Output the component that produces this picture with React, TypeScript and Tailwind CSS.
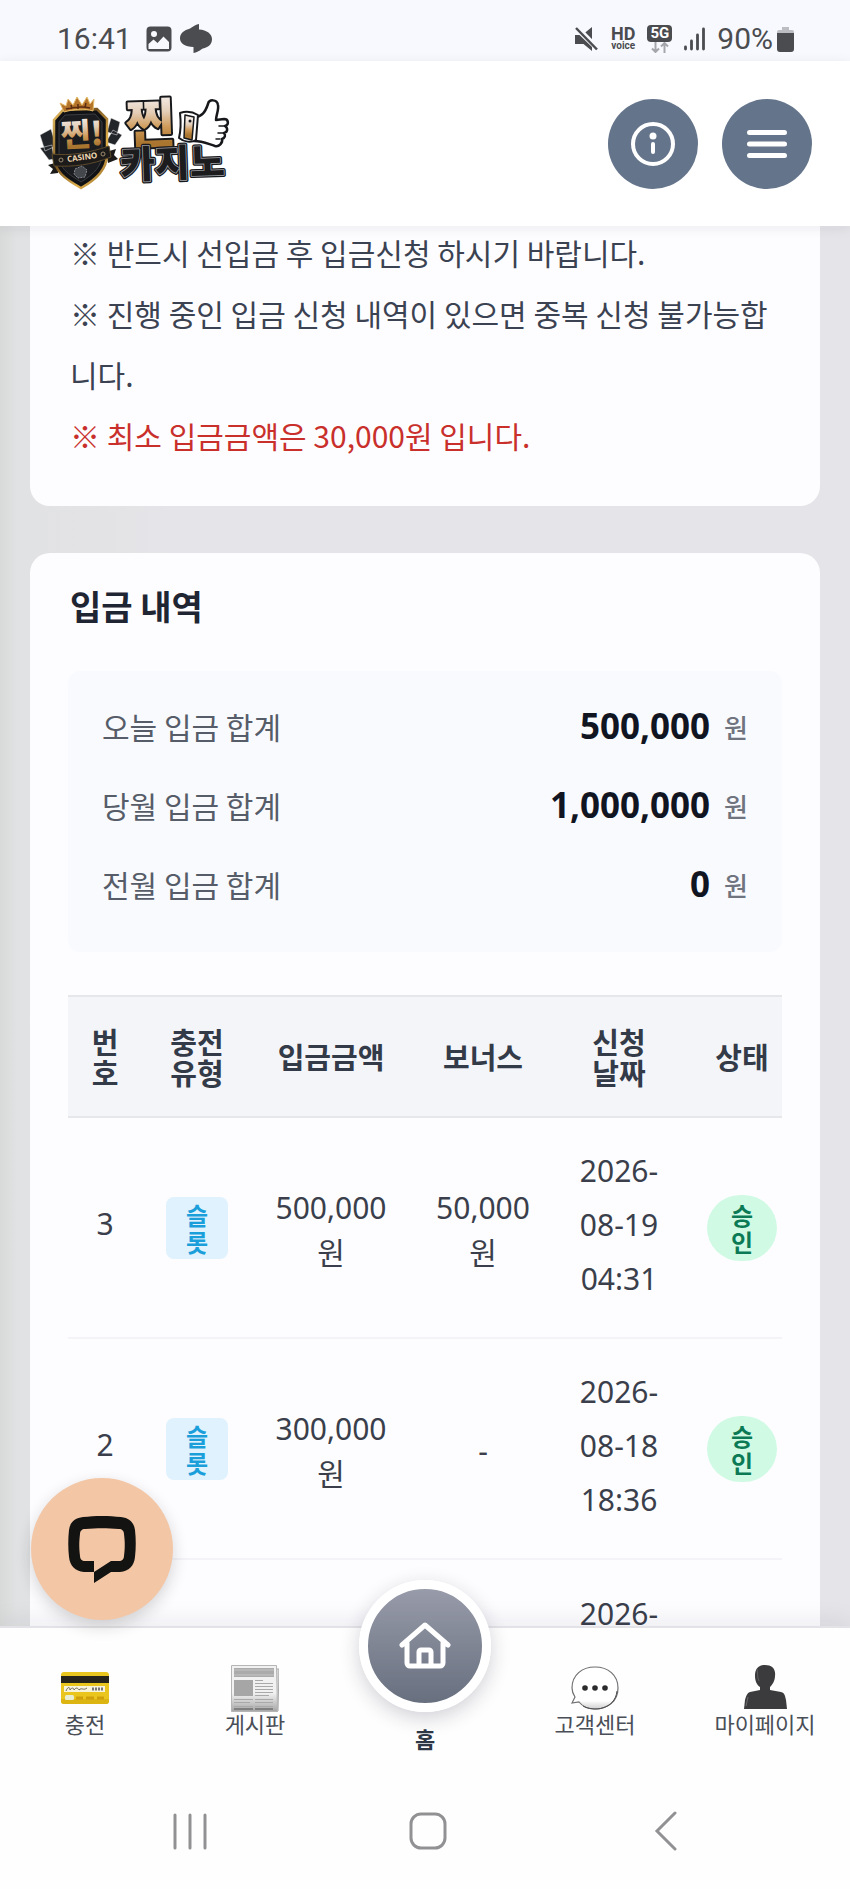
import React from 'react';

type Deposit = {
    no: number;
    type: string;
    amount: string;
    bonus?: string;
    date: [string, string, string];
    status: string;
};

const totals = [
    {label: '오늘 입금 합계', value: '500,000'},
    {label: '당월 입금 합계', value: '1,000,000'},
    {label: '전월 입금 합계', value: '0'},
];

const deposits: Deposit[] = [
    {no: 3, type: '슬롯', amount: '500,000', bonus: '50,000', date: ['2026-', '08-19', '04:31'], status: '승인'},
    {no: 2, type: '슬롯', amount: '300,000', date: ['2026-', '08-18', '18:36'], status: '승인'},
];

function StatusBar() {
    return (
        <div className="flex h-[61px] shrink-0 items-center justify-between bg-[#f8f9fe] pl-[57px] pr-14 pt-4 font-['Roboto',sans-serif] text-[30px] leading-[44px] text-[#4b4c50]">
            <div className="flex items-center gap-2">
                <span className="mr-1.5">16:41</span>
                <svg className="size-[26px]" viewBox="0 0 26 26" aria-hidden="true">
                    <rect x="1.5" y="1.5" width="23" height="23" rx="3" fill="#4b4c50" stroke="#4b4c50" strokeWidth="2"/>
                    <circle cx="8" cy="8" r="3" fill="#f8f9fe"/>
                    <path d="M2.500 18l5-4.500 4 3.500 6-6.500 5.500 5.500v7h-20.500z" fill="#f8f9fe"/>
                </svg>
                <svg className="h-[29px] w-8" viewBox="0 0 32 29" aria-hidden="true">
                    <path d="M19 0v5.500C27 6 32 10 32 15c0 6-4 8-9 9.500-2 .5-3 3-9.500 4.500v-6C5 22.500 0 19.500 0 14.500 0 9 4 6.500 9 5c3-1 4-3.500 10-5z" fill="#4b4c50"/>
                </svg>
            </div>
            <div className="flex items-center gap-3">
                <svg className="h-6 w-6" viewBox="0 0 24 24" fill="#4b4c50" aria-hidden="true">
                    <path d="M9 6.500L17 0v14zM0 8h4.500L17 20v4l-8.500-7H0z"/>
                    <path d="M3 0l21 21.500" stroke="#f8f9fe" strokeWidth="3"/>
                    <path d="M1 1l21 21.500" stroke="#4b4c50" strokeWidth="2.500"/>
                </svg>
                <div className="flex flex-col items-center font-bold">
                    <span className="text-[18px] leading-[14px]">HD</span>
                    <span className="text-[10px] leading-[10px]">voice</span>
                </div>
                <div className="flex flex-col items-center">
                    <span className="rounded-sm bg-[#4b4c50] px-[3px] text-[15px] font-bold leading-[17px] text-white">5G</span>
                    <svg className="h-[11px] w-[18px]" viewBox="0 0 18 11" fill="none" stroke="#a5a6ab" strokeWidth="2" aria-hidden="true">
                        <path d="M4.500 0v10M1 6.500L4.500 10 8 6.500M13.500 11V1M10 4.500L13.500 1 17 4.500"/>
                    </svg>
                </div>
                <svg className="h-6 w-[21px]" viewBox="0 0 21 24" stroke="#4b4c50" strokeWidth="2.800" strokeLinecap="round" aria-hidden="true">
                    <path d="M1.500 20v2M7.500 14v8M13.500 8v14M19.500 2v20"/>
                </svg>
                <div className="flex items-center gap-1">
                    <span>90%</span>
                    <svg className="h-[26px] w-[17px]" viewBox="0 0 17 26" aria-hidden="true">
                        <path d="M5 1h7v3h3a2 2 0 012 2v3H0V6a2 2 0 012-2h3z" fill="#bcbdc2"/>
                        <path d="M0 7h17v16a3 3 0 01-3 3H3a3 3 0 01-3-3z" fill="#4b4c50"/>
                    </svg>
                </div>
            </div>
        </div>
    );
}

function SiteLogo() {
    return (
        <svg className="h-[100px] w-[192px] overflow-visible" viewBox="0 0 192 100" role="img" aria-label="찐카지노">
            <defs>
                <linearGradient id="gold" x1="0" y1="0" x2="0" y2="1">
                    <stop offset="0.200" stopColor="#f3eae4"/>
                    <stop offset="0.400" stopColor="#e3cdb6"/>
                    <stop offset="0.600" stopColor="#cf9a58"/>
                    <stop offset="0.800" stopColor="#a9752f"/>
                </linearGradient>
                <linearGradient id="rim" x1="0" y1="0" x2="1" y2="1">
                    <stop offset="0" stopColor="#e9c062"/>
                    <stop offset="0.400" stopColor="#7a5621"/>
                    <stop offset="0.700" stopColor="#e0b04c"/>
                    <stop offset="1" stopColor="#8a6224"/>
                </linearGradient>
            </defs>
            <g fill="#22252a" stroke="#f2f2f2" strokeWidth="0.500">
                <path d="M0 39l11-6 5 17-11 5zM0 52l12-3 2 14-5 1z"/>
                <path d="M71 22l9 4-3 13-10-3zM73 34l9 5-7 10-9-3z"/>
            </g>
            <path d="M8 69l10-3v11l-8 1 3-5zM66 56l10-3-2 6 4 4-10 4z" fill="#1b1a19"/>
            <path d="M23 14l34-1 10 10v35c0 15-10 25-26 34C25 83 14 75 14 60V24z" fill="#111215" stroke="url(#rim)" strokeWidth="2.500"/>
            <path d="M25 19l30-1 7 8v32c0 12-8 20-21 28-13-8-22-14-22-26V26z" fill="#1b1c20" stroke="#3b3c40" strokeWidth="1"/>
            <path d="M24 16L20 7l6 3 2-7 5 6 4-8 5 8 5-8 3 7 4-5-1 12c-9-3-19-2-29 1z" fill="#b4742a" stroke="#e6bd6b" strokeWidth="1"/>
            <path d="M26 13c8-2 17-3 24-1M38 8v5M31 9l1 4M46 7l-1 4" stroke="#5c2c12" strokeWidth="1.500" fill="none"/>
            <text x="21" y="50" transform="rotate(-3 40 40)" fontFamily="'Noto Sans CJK KR', sans-serif" fontWeight="900" fontSize="32" fill="url(#gold)">찐!</text>
            <path d="M12 58c18 2 37-1 57-8l2 11c-20 8-37 10-57 9z" fill="#1d1b19" stroke="#5d4a2b" strokeWidth="1"/>
            <text x="42" y="64" textAnchor="middle" transform="rotate(-8 42 60)" fontFamily="'Open Sans', sans-serif" fontWeight="700" fontSize="8" fill="#f0d9b5">CASINO</text>
            <circle cx="21" cy="64" r="2" fill="none" stroke="#9a8a70" strokeWidth="1"/>
            <circle cx="63" cy="58" r="2" fill="none" stroke="#9a8a70" strokeWidth="1"/>
            <path d="M35 73l7-3 5 4-2 7-7 1-4-4z" fill="#44474c" stroke="#85888d" strokeWidth="1" strokeDasharray="2 1"/>
            <g fontFamily="'Noto Sans CJK KR', sans-serif" fontWeight="900" strokeLinejoin="round" paintOrder="stroke">
                <text x="86" y="47" transform="rotate(-2 110 30)" fontSize="53" stroke="#17181b" strokeWidth="4" fill="url(#gold)">찐</text>
                <text x="80" y="81" transform="rotate(-2 130 70)" fontSize="38" stroke="#17181b" strokeWidth="4" fill="#1c1c1f">카지노</text>
                <text x="80" y="81" transform="rotate(-2 130 70)" fontSize="38" fill="#1c1c1f" stroke="#a5a6aa" strokeWidth="1.500" aria-hidden="true">카지노</text>
            </g>
            <g strokeLinejoin="round" strokeLinecap="round">
                <path d="M154 22c8-2 11-5 14-14 1-5 9-5 10 1 1 5-2 10-2 15l8-1c5 0 5 6 1 7 3 2 3 6-1 7 2 2 1 5-2 6 1 4-3 8-7 7-7-2-12-5-21-5z" fill="#fff" stroke="#17181b" strokeWidth="2.500"/>
                <path d="M140 17c6-2 13-1 18 2l-2 25c-5 3-12 2-17-2 2-8 2-16 1-25z" fill="#fff" stroke="#17181b" strokeWidth="2"/>
                <path d="M145 19l9 2-2 23-8-2z" fill="url(#gold)" stroke="#17181b" strokeWidth="1.500"/>
                <circle cx="150" cy="25" r="1.500" fill="#17181b"/>
                <path d="M179 30h5M178 37h5M176 43h4" stroke="#17181b" strokeWidth="1.500"/>
            </g>
        </svg>
    );
}

function Header() {
    return (
        <header className="relative z-10 flex h-[165px] shrink-0 items-center justify-between bg-white pl-10 pr-[38px] shadow-[0_2px_12px_rgba(30,30,60,0.08)]">
            <a href="#home" className="pt-1">
                <SiteLogo/>
            </a>
            <div className="flex gap-6">
                <button type="button" aria-label="안내" className="flex size-[90px] items-center justify-center rounded-full bg-[#64748b] text-white">
                    <svg className="size-11" viewBox="0 0 44 44" fill="none" stroke="currentColor" strokeWidth="4" strokeLinecap="round">
                        <circle cx="22" cy="22" r="20"/>
                        <circle cx="22" cy="14" r="3.500" fill="currentColor" stroke="none"/>
                        <path d="M22 22v8"/>
                    </svg>
                </button>
                <button type="button" aria-label="메뉴" className="flex size-[90px] items-center justify-center rounded-full bg-[#64748b] text-white">
                    <svg className="h-7 w-10" viewBox="0 0 40 28" fill="none" stroke="currentColor" strokeWidth="5" strokeLinecap="round">
                        <path d="M2.500 2.500h35M2.500 14h35M2.500 25.500h35"/>
                    </svg>
                </button>
            </div>
        </header>
    );
}

function Notice() {
    return (
        <section className="-mt-1 rounded-b-[20px] bg-[#fdfdff] px-10 pb-10 text-[30px] leading-[61px] text-[#3b4252]">
            <p>※ 반드시 선입금 후 입금신청 하시기 바랍니다.</p>
            <p>※ 진행 중인 입금 신청 내역이 있으면 중복 신청 불가능합니다.</p>
            <p className="text-[#c9302c]">※ 최소 입금금액은 30,000원 입니다.</p>
        </section>
    );
}

function Totals() {
    return (
        <dl className="mt-10 rounded-xl bg-[#f9fafe] px-[34px] pb-7 pt-4">
            {totals.map((t) => (
                <div key={t.label} className="flex h-[79px] items-center justify-between">
                    <dt className="text-[30px] text-[#565c68]">{t.label}</dt>
                    <dd className="flex items-center gap-[14px]">
                        <span className="font-['Noto_Sans','Noto_Sans_CJK_KR',sans-serif] text-[35px] font-bold text-[#111522]">{t.value}</span>
                        <span className="text-[26px] font-medium text-[#70747e]">원</span>
                    </dd>
                </div>
            ))}
        </dl>
    );
}

function Won({value}: { value: string }) {
    return (
        <>
            <span className="block">{value}</span>
            <span className="block">원</span>
        </>
    );
}

function DepositTable() {
    return (
        <table className="mt-[43px] w-full table-fixed text-center font-['Noto_Sans','Noto_Sans_CJK_KR',sans-serif] text-[30px] text-[#3a3f4b]">
            <colgroup>
                <col className="w-[74px]"/>
                <col className="w-[110px]"/>
                <col className="w-[158px]"/>
                <col className="w-[146px]"/>
                <col className="w-[126px]"/>
                <col className="w-[100px]"/>
            </colgroup>
            <thead className="border-y-2 border-[#e5e7eb] bg-[#f4f5f9] font-['Noto_Sans_CJK_KR',sans-serif] text-[29px] leading-[31px] text-[#333a48]">
                <tr className="h-[121px]">
                    <th scope="col">번<br/>호</th>
                    <th scope="col">충전<br/>유형</th>
                    <th scope="col">입금금액</th>
                    <th scope="col">보너스</th>
                    <th scope="col">신청<br/>날짜</th>
                    <th scope="col" className="pl-5">상태</th>
                </tr>
            </thead>
            <tbody>
                {deposits.map((d) => (
                    <tr key={d.no} className="h-[221px] border-b-2 border-[#f4f4f8]">
                        <td className="pb-2">{d.no}</td>
                        <td>
                            <span className="mx-auto block w-[62px] rounded-lg bg-[#e0f2fe] px-[19px] py-1 font-['Noto_Sans_CJK_KR',sans-serif] text-[24px] font-bold leading-[27px] text-[#1a9fdb]">{d.type}</span>
                        </td>
                        <td className="pt-1 leading-[45px]"><Won value={d.amount}/></td>
                        <td className="pt-1 leading-[45px]">{d.bonus ? <Won value={d.bonus}/> : '-'}</td>
                        <td className="pb-1.5 leading-[54px]">
                            {d.date.map((part) => <span key={part} className="block">{part}</span>)}
                        </td>
                        <td className="pl-5">
                            <span className="mx-auto block w-[70px] rounded-full bg-[#d1fae5] px-[23px] py-[6px] font-['Noto_Sans_CJK_KR',sans-serif] text-[24px] font-bold leading-[27px] text-[#0b7a55]">{d.status}</span>
                        </td>
                    </tr>
                ))}
                <tr className="h-[221px]">
                    <td colSpan={4}></td>
                    <td className="pt-[27px] align-top leading-[54px]">2026-</td>
                    <td></td>
                </tr>
            </tbody>
        </table>
    );
}

function CardIcon() {
    return (
        <svg className="size-12" viewBox="0 0 48 48" aria-hidden="true">
            <rect y="8" width="48" height="32" rx="3" fill="#eac51e"/>
            <path d="M0 35h48v2a3 3 0 01-3 3H3a3 3 0 01-3-3z" fill="#dcb512"/>
            <path d="M0 12h48v7H0z" fill="#26231a"/>
            <path d="M3 22h41v6H3z" fill="#f8f4dc"/>
            <path d="M5 27c2-5 4-4 4-1 2-3 4-2 4 0 2-3 4-2 5 0 3-3 4 1 8-2" fill="none" stroke="#6c675b" strokeWidth="1"/>
            <path d="M31 25h12" stroke="#777" strokeWidth="3" strokeDasharray="2 1"/>
            <rect x="4" y="31" width="9" height="5" rx="1.500" fill="#e9edd2"/>
            <path d="M15 34h7M25 34h8M36 34h7" stroke="#cfa00c" strokeWidth="3"/>
        </svg>
    );
}

function NewspaperIcon() {
    return (
        <svg className="size-12" viewBox="0 0 48 48" aria-hidden="true">
            <defs>
                <linearGradient id="paper" x1="0" y1="0" x2="0" y2="1">
                    <stop offset="0.600" stopColor="#f1f1f1"/>
                    <stop offset="1" stopColor="#a5a5a5"/>
                </linearGradient>
            </defs>
            <path d="M40 5h8l-1 42h-7z" fill="#d8d8d8" stroke="#aaa" strokeWidth="1"/>
            <path d="M.5 1.500h45l1 46H.500z" fill="url(#paper)" stroke="#b5b5b5" strokeWidth="1"/>
            <path d="M3 4h40v9H3z" fill="#ababab"/>
            <path d="M3 6h40M3 11h40" stroke="#c4c4c4" strokeWidth="1"/>
            <path d="M3 16h19v16H3z" fill="#a6a6a6"/>
            <path d="M24 16.500h8M24 19.500h18M24 22.500h18M24 25.500h18M24 28.500h18M24 31.500h14M3 35.500h19M3 38.500h16M24 35.500h18M24 38.500h18M3 42.500h19M24 42.500h18" stroke="#a9a9a9" strokeWidth="1"/>
            <path d="M3 45h19M24 45h18" stroke="#808080" strokeWidth="2"/>
        </svg>
    );
}

function BubbleIcon() {
    return (
        <svg className="size-12" viewBox="0 0 48 48" aria-hidden="true">
            <defs>
                <linearGradient id="bubble" x1="0" y1="0" x2="0" y2="1">
                    <stop offset="0.800" stopColor="#fff"/>
                    <stop offset="1" stopColor="#cfcfcf"/>
                </linearGradient>
            </defs>
            <path d="M24 3c13 0 23 8 23 21S37 45 24 45c-7 0-12-2-16-7l-7 1 3-6C2 30 1 27 1 24 1 11 11 3 24 3z" fill="url(#bubble)" stroke="#6f6f72" strokeWidth="1.200"/>
            <path d="M12 42c10 6 32 4 34-15" fill="none" stroke="#4d4d50" strokeWidth="1"/>
            <g fill="#2b2b2d">
                <circle cx="14" cy="24" r="2.800"/>
                <circle cx="24" cy="24" r="2.800"/>
                <circle cx="34" cy="24" r="2.800"/>
            </g>
        </svg>
    );
}

function PersonIcon() {
    return (
        <svg className="size-12" viewBox="0 0 48 48" aria-hidden="true">
            <path d="M24 1c7 0 11 4 10 11 0 5-3 9-5 11v3l11 2c4 1 4 4 5 8l1 9H3l1-9c1-4 2-7 5-8l10-2v-3c-3-2-5-6-5-11C14 5 17 1 24 1z" fill="#3b3a3d"/>
            <path d="M16 5c1 4 0 8 2 12" fill="none" stroke="#5d5c60" strokeWidth="1"/>
            <path d="M7 33l-2 9" stroke="#6b6a6e" strokeWidth="1"/>
        </svg>
    );
}

function Tab({label, href, children}: { label: string, href: string, children: React.ReactNode }) {
    return (
        <a href={href} className="flex flex-1 flex-col items-center pt-9 text-[22px] leading-[22px] text-[#4a4e57]">
            {children}
            {label}
        </a>
    );
}

function BottomTabs() {
    return (
        <nav className="relative z-10 flex h-[154px] shrink-0 border-t-2 border-[#e3e3e7] bg-[#fefefe] shadow-[0_-4px_24px_rgba(30,30,60,0.08)]">
            <Tab label="충전" href="#charge"><CardIcon/></Tab>
            <Tab label="게시판" href="#board"><NewspaperIcon/></Tab>
            <a href="#home" className="-mt-12 flex flex-1 flex-col items-center text-[22px] font-bold leading-7 text-[#2d3746]">
                <span className="mb-3 flex size-[132px] items-center justify-center rounded-full border-[9px] border-white bg-linear-to-b from-[#9c9fad] to-[#646c7b] bg-origin-border shadow-[0_6px_20px_rgba(30,30,60,0.2)]">
                    <svg className="size-[52px]" viewBox="0 0 52 52" fill="none" stroke="#fff" strokeWidth="5" strokeLinecap="round" strokeLinejoin="round" aria-hidden="true">
                        <path d="M3 25L26 5l23 20M8 23v20a3 3 0 003 3h30a3 3 0 003-3V23M20 46V32a2 2 0 012-2h8a2 2 0 012 2v14"/>
                    </svg>
                </span>
                홈
            </a>
            <Tab label="고객센터" href="#support"><BubbleIcon/></Tab>
            <Tab label="마이페이지" href="#mypage"><PersonIcon/></Tab>
            <button type="button" aria-label="채팅 상담" className="absolute -top-[150px] left-[31px] flex size-[142px] items-center justify-center rounded-full bg-[#f3c6a5] shadow-[0_6px_16px_rgba(30,30,30,0.18)]">
                <svg className="size-[68px]" viewBox="0 0 68 68" fill="#131311">
                    <path fillRule="evenodd" d="M15 2c12-1.500 26-1.500 38 0 9 1 13 6 14 13 1 9 1 18 0 27-1 9-6 14-15 15H43L26 68V46h17-26c-3 0-5-2-5-5-1-8-1-14 0-22 0-3 2-5 5-5 12-1 22-1 34 0 3 0 5 2 5 5 1 8 1 14 0 22 0 3-2 5-5 5h-8L26 57H16C7 56 2 51 1 42 0 33 0 24 1 15 2 7 7 3 15 2z"/>
                </svg>
            </button>
        </nav>
    );
}

function SystemNav() {
    return (
        <div className="relative z-10 flex h-[109px] shrink-0 items-center justify-around bg-[#fefefe] pb-2 pl-[71px] pr-[65px] text-[#919194]">
            <button type="button" aria-label="최근 앱">
                <svg className="size-10" viewBox="0 0 40 40" fill="none" stroke="currentColor" strokeWidth="3" strokeLinecap="round">
                    <path d="M5 4v33M20 4v33M35 4v33"/>
                </svg>
            </button>
            <button type="button" aria-label="홈">
                <svg className="size-10" viewBox="0 0 40 40" fill="none" stroke="currentColor" strokeWidth="3">
                    <rect x="3" y="3" width="34" height="34" rx="10"/>
                </svg>
            </button>
            <button type="button" aria-label="뒤로">
                <svg className="size-10" viewBox="0 0 40 40" fill="none" stroke="currentColor" strokeWidth="3" strokeLinecap="round">
                    <path d="M29 2L11 20l18 18"/>
                </svg>
            </button>
        </div>
    );
}

export default function App() {
    return (
        <div className="flex h-screen flex-col overflow-hidden bg-white font-['Noto_Sans_CJK_KR',sans-serif]">
            <StatusBar/>
            <Header/>
            <main className="flex min-h-0 flex-1 flex-col gap-[47px] overflow-hidden bg-linear-to-r from-[#d8dad9] from-0% via-[#e1e2e3] via-2% to-[#e5e4e8] to-20% px-[30px]">
                <Notice/>
                <section className="rounded-t-[20px] bg-[#fdfdff] px-[38px] pt-7">
                    <h2 className="pl-[2px] text-[34px] font-bold leading-[50px] text-[#1f2533]">입금 내역</h2>
                    <Totals/>
                    <DepositTable/>
                </section>
            </main>
            <BottomTabs/>
            <SystemNav/>
        </div>
    );
}
